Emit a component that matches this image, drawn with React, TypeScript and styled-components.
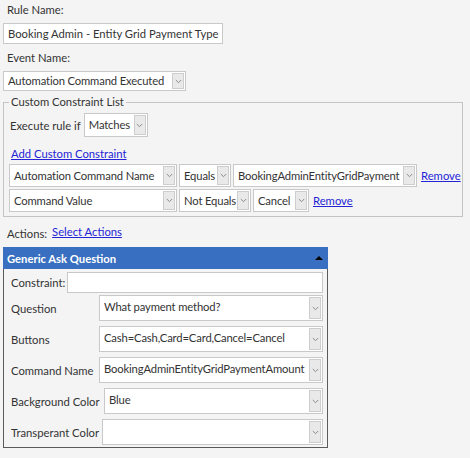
import React from "react"
import styled, { createGlobalStyle } from "styled-components"

const GlobalStyle = createGlobalStyle`
  body {
    margin: 0;
    background: #f4f4f4;
    font-family: Lato, "Open Sans", sans-serif;
    font-size: 11.25px;
    color: #333;
  }
`

const Page = styled.div`
  padding: 2px 0 0 3px;
  width: 470px;
  box-sizing: border-box;
`

const FieldLabel = styled.div<{ $top?: number }>`
  padding-left: 4px;
  line-height: 16px;
  margin-top: ${p => p.$top ?? 0}px;
  margin-bottom: 5px;
`

const TextBox = styled.div<{ $w: number }>`
  box-sizing: border-box;
  width: ${p => p.$w}px;
  height: 21px;
  border: 1px solid #c9c9c9;
  background: #fff;
  padding-left: 4px;
  line-height: 19px;
  white-space: nowrap;
  overflow: hidden;
`

const SelectBox = styled.div<{ $w?: number; $h: number }>`
  box-sizing: border-box;
  display: flex;
  align-items: stretch;
  width: ${p => (p.$w ? `${p.$w}px` : "auto")};
  flex: ${p => (p.$w ? "none" : "1")};
  height: ${p => p.$h}px;
  border: 1px solid #c9c9c9;
  background: #fff;
`

const SelectText = styled.span<{ $top?: boolean }>`
  flex: 1;
  min-width: 0;
  padding-left: 4px;
  white-space: nowrap;
  overflow: hidden;
  letter-spacing: -0.15px;
  display: flex;
  align-items: ${p => (p.$top ? "flex-start" : "center")};
  padding-top: ${p => (p.$top ? "3px" : "0")};
  line-height: 16px;
`

const DropButton = styled.span`
  box-sizing: border-box;
  flex: none;
  width: 12px;
  margin: 1px;
  background: #e9e9e9;
  border: 1px solid #cdcdcd;
  display: flex;
  align-items: center;
  justify-content: center;
`

const Chevron = () => (
  <svg width="7" height="5" viewBox="0 0 7 5">
    <path d="M0.8 1 L3.5 3.7 L6.2 1" fill="none" stroke="#8a8a8a" strokeWidth="1" />
  </svg>
)

interface SelectProps {
  value?: string
  width?: number
  height: number
  top?: boolean
}
const Select: React.FC<SelectProps> = ({ value = "", width, height, top }) => (
  <SelectBox $w={width} $h={height}>
    <SelectText $top={top}>{value}</SelectText>
    <DropButton>
      <Chevron />
    </DropButton>
  </SelectBox>
)

const Fieldset = styled.fieldset`
  box-sizing: border-box;
  width: 460px;
  margin: 3px 0 0 0;
  padding: 3px 5px 4px 5px;
  border: 1px solid #c4c4c4;
  min-width: 0;
`

const Legend = styled.legend`
  padding: 0 2px;
  line-height: 16px;
`

const ExecuteRow = styled.div`
  display: flex;
  align-items: center;
  gap: 3px;
  padding-left: 1px;
  white-space: nowrap;
`

const Link = styled.a`
  color: #2424d6;
  text-decoration: underline;
  cursor: pointer;
  line-height: 16px;
  white-space: nowrap;
`

const LinkLine = styled.div`
  margin: 9px 0 2px 2px;
  line-height: 16px;
`

const ConstraintRow = styled.div`
  display: flex;
  align-items: center;
  gap: 2px;
  & + & {
    margin-top: 2px;
  }
  ${Link} {
    margin-left: 2px;
  }
`

const ActionsRow = styled.div`
  display: flex;
  align-items: flex-start;
  gap: 5px;
  padding-left: 4px;
  margin-top: 7px;
  line-height: 16px;
`

const ActionsLabel = styled.span`
  padding-top: 2px;
`

const Panel = styled.div`
  box-sizing: border-box;
  width: 325px;
  margin-top: 5px;
  border: 1px solid #5a5a5a;
  border-top: none;
`

const PanelHeader = styled.div`
  display: flex;
  align-items: center;
  justify-content: space-between;
  height: 22px;
  background: #386fc0;
  color: #fff;
  font-weight: 700;
  padding: 0 4px 0 4px;
  margin: 0 -1px;
`

const CollapseArrow = styled.span`
  width: 0;
  height: 0;
  border-left: 4px solid transparent;
  border-right: 4px solid transparent;
  border-bottom: 4px solid #000;
  margin-right: 1px;
`

const PanelBody = styled.div`
  padding: 3px 4px 2px 7px;
  display: flex;
  flex-direction: column;
  gap: 5px;
`

const PanelRow = styled.div`
  display: flex;
  align-items: center;
`

const PanelLabel = styled.span<{ $w: number }>`
  min-width: ${p => p.$w}px;
  padding-right: 2px;
  box-sizing: border-box;
  flex: none;
  white-space: nowrap;
`

const ConstraintField = styled.div`
  display: flex;
  align-items: center;
  margin-bottom: -3px;
`

export default function App() {
  return (
    <Page>
      <GlobalStyle />
      <FieldLabel $top={0}>Rule Name:</FieldLabel>
      <TextBox $w={220}>Booking Admin - Entity Grid Payment Type</TextBox>
      <FieldLabel $top={6}>Event Name:</FieldLabel>
      <Select value="Automation Command Executed" width={183} height={20} />

      <Fieldset>
        <Legend>Custom Constraint List</Legend>
        <ExecuteRow>
          <span>Execute rule if</span>
          <Select value="Matches" width={64} height={24} />
        </ExecuteRow>
        <LinkLine>
          <Link>Add Custom Constraint</Link>
        </LinkLine>
        <ConstraintRow>
          <Select value="Automation Command Name" width={168} height={23} />
          <Select value="Equals" width={52} height={23} />
          <Select value="BookingAdminEntityGridPayment" width={184} height={23} />
          <Link>Remove</Link>
        </ConstraintRow>
        <ConstraintRow>
          <Select value="Command Value" width={168} height={23} />
          <Select value="Not Equals" width={72} height={23} />
          <Select value="Cancel" width={56} height={23} />
          <Link>Remove</Link>
        </ConstraintRow>
      </Fieldset>

      <ActionsRow>
        <ActionsLabel>Actions:</ActionsLabel>
        <Link>Select Actions</Link>
      </ActionsRow>

      <Panel>
        <PanelHeader>
          <span>Generic Ask Question</span>
          <CollapseArrow />
        </PanelHeader>
        <PanelBody>
          <ConstraintField>
            <PanelLabel $w={56}>Constraint:</PanelLabel>
            <TextBox $w={256} />
          </ConstraintField>
          <PanelRow>
            <PanelLabel $w={88}>Question</PanelLabel>
            <Select value="What payment method?" height={26} top />
          </PanelRow>
          <PanelRow>
            <PanelLabel $w={88}>Buttons</PanelLabel>
            <Select value="Cash=Cash,Card=Card,Cancel=Cancel" height={26} top />
          </PanelRow>
          <PanelRow>
            <PanelLabel $w={88}>Command Name</PanelLabel>
            <Select value="BookingAdminEntityGridPaymentAmount" height={26} top />
          </PanelRow>
          <PanelRow>
            <PanelLabel $w={93}>Background Color</PanelLabel>
            <Select value="Blue" height={26} top />
          </PanelRow>
          <PanelRow>
            <PanelLabel $w={91}>Transperant Color</PanelLabel>
            <Select height={26} top />
          </PanelRow>
        </PanelBody>
      </Panel>
    </Page>
  )
}
